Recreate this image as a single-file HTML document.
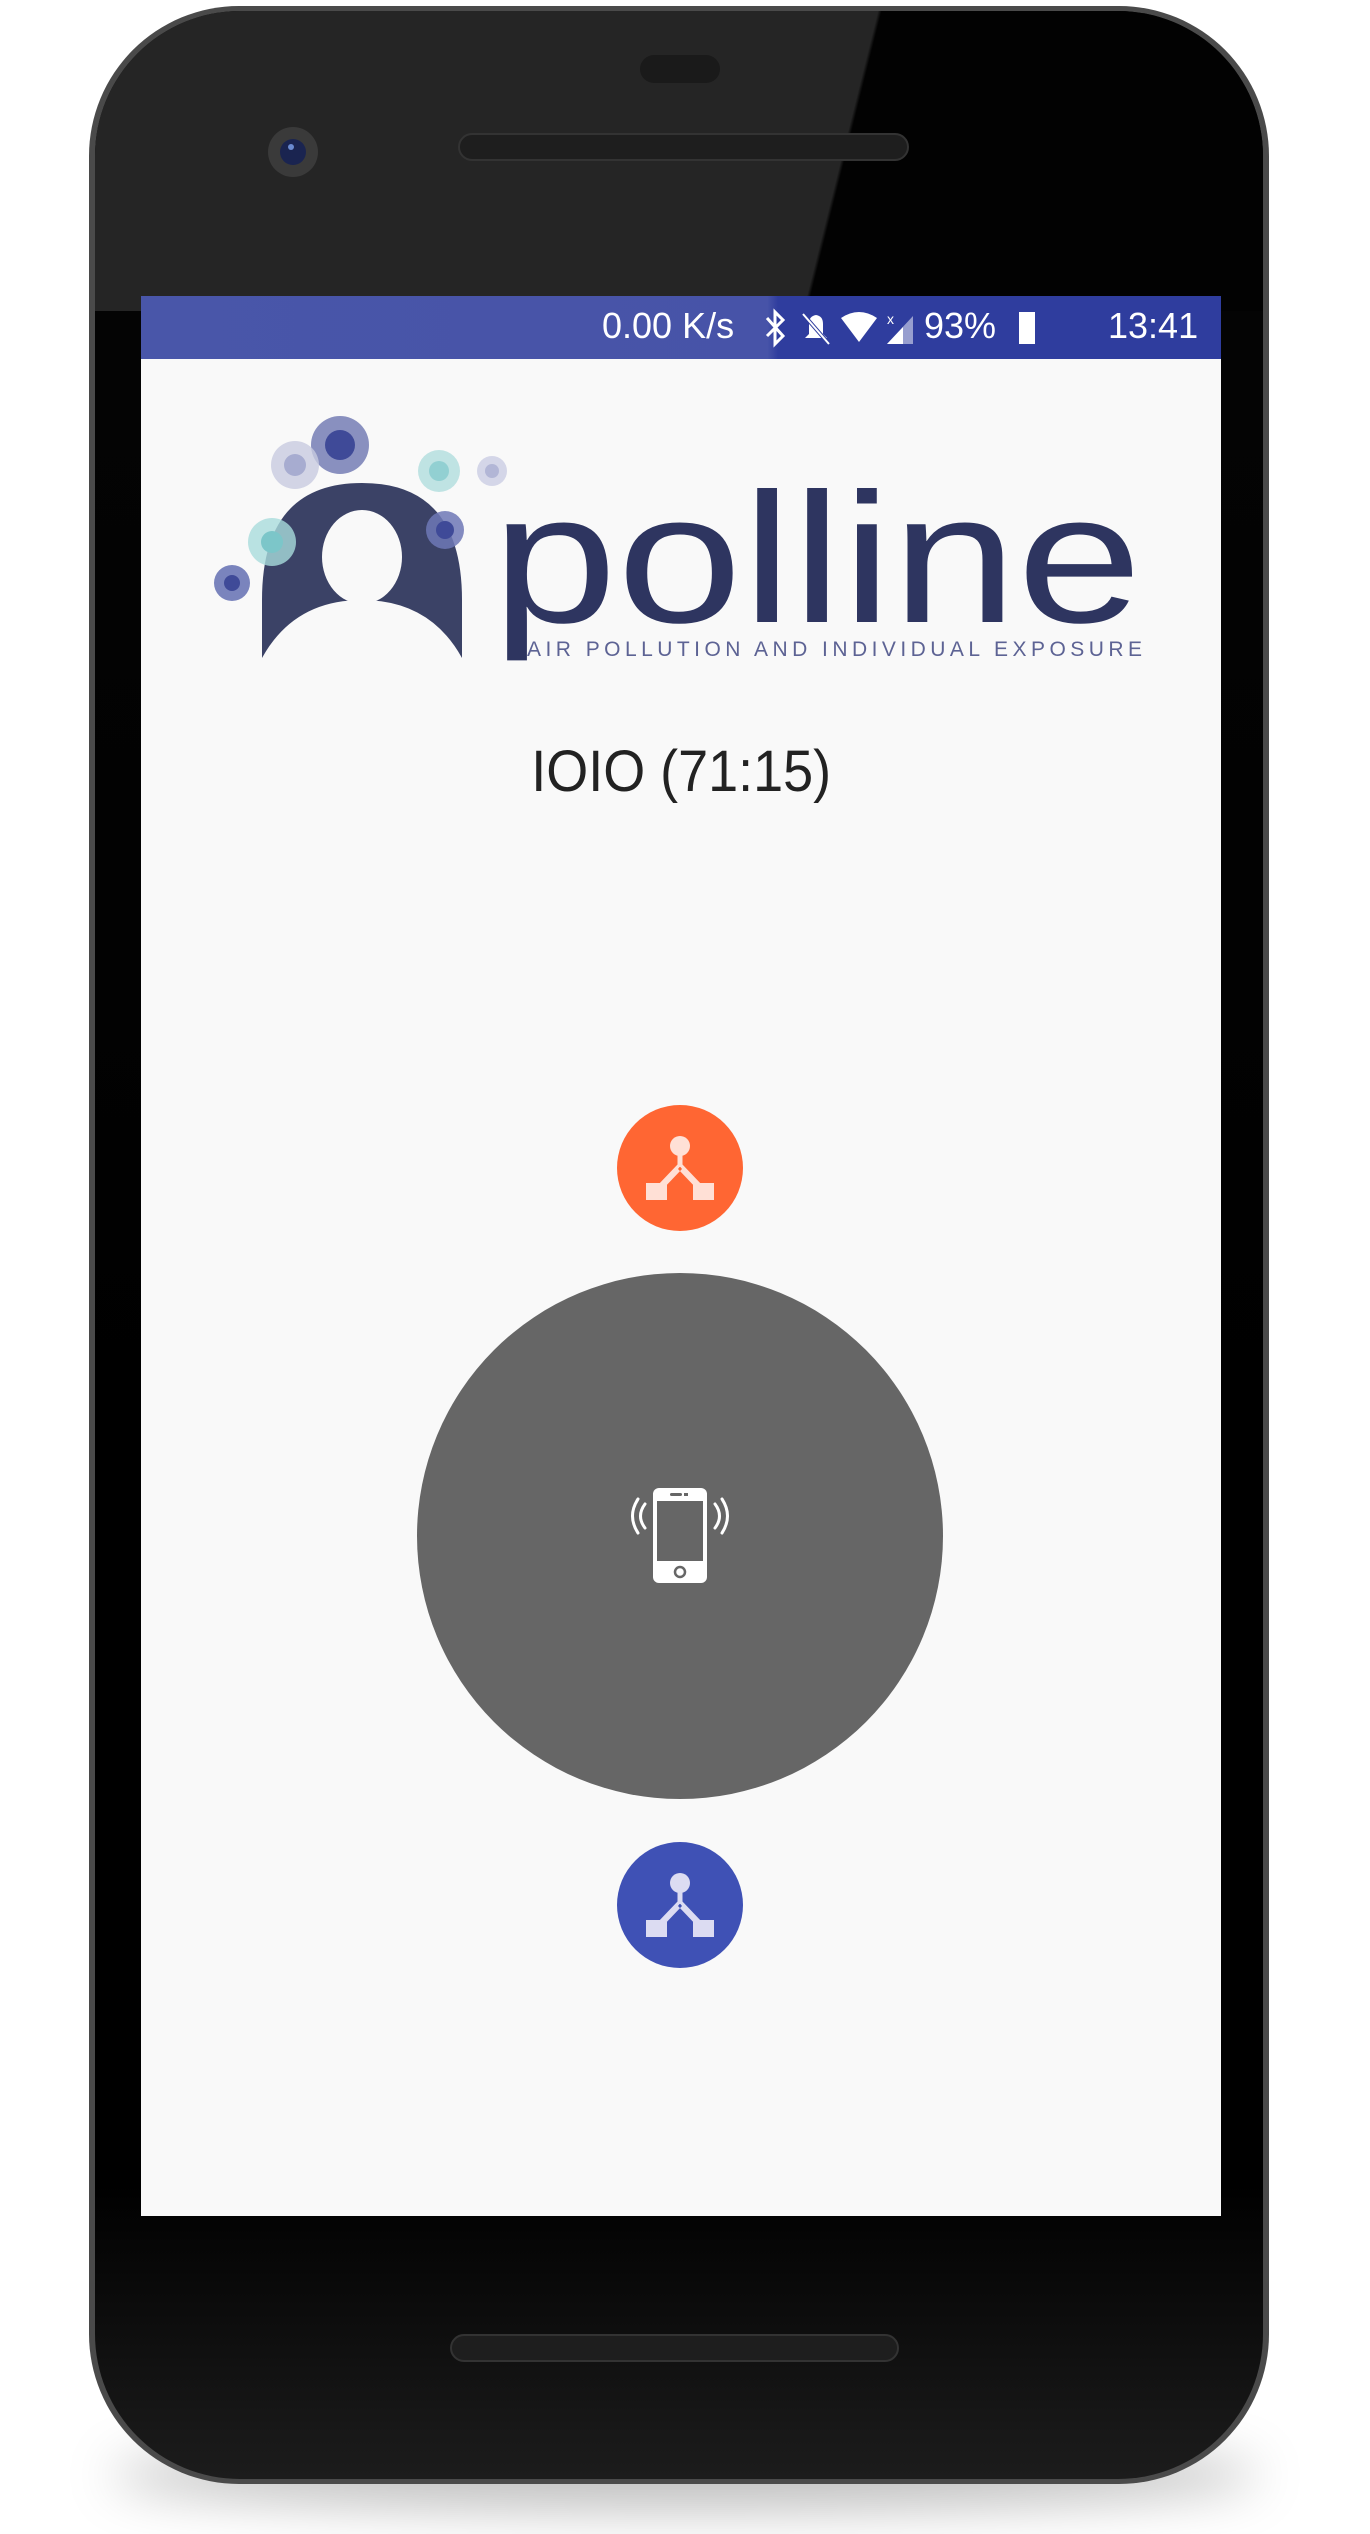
<!DOCTYPE html>
<html><head><meta charset="utf-8"><style>
html,body{margin:0;padding:0;background:#fff;}
body{width:1370px;height:2534px;position:relative;overflow:hidden;font-family:"Liberation Sans",sans-serif;}
.shadow{position:absolute;left:110px;top:2440px;width:1150px;height:70px;border-radius:50%;background:rgba(0,0,0,0.25);filter:blur(25px);}
.phone{position:absolute;left:89px;top:6px;width:1180px;height:2478px;border-radius:150px;background:#4a4a4a;}
.phone2{position:absolute;left:95px;top:11px;width:1168px;height:2468px;border-radius:145px;background:linear-gradient(180deg,#050505 0%,#000 60%,#000 88%,#1c1c1c 100%);}
.glare{position:absolute;left:95px;top:11px;width:1168px;height:300px;border-radius:145px 145px 0 0;background:linear-gradient(104deg,#252525 0%,#252525 63%,#020202 63.3%,#020202 100%);}
.screen{position:absolute;left:141px;top:296px;width:1080px;height:1920px;background:#f9f9f9;}
.status{position:absolute;left:0;top:0;width:1080px;height:63px;background:linear-gradient(90deg,#4956a9 0%,#4753a8 58%,#2f3d9e 59%,#2f3d9e 100%);color:#fff;font-size:36px;}
.spk{position:absolute;border-radius:14px;background:#1e1e1e;border:2px solid #333;}
</style></head><body>
<div class="shadow"></div>
<div class="phone"></div>
<div class="phone2"></div>
<div class="glare"></div>
<div class="spk" style="left:458px;top:133px;width:447px;height:24px;"></div>
<div style="position:absolute;left:640px;top:55px;width:80px;height:28px;border-radius:14px;background:#1a1a1a;"></div>
<div style="position:absolute;left:268px;top:127px;width:50px;height:50px;border-radius:50%;background:#3a3a3a;"><div style="position:absolute;left:12px;top:12px;width:26px;height:26px;border-radius:50%;background:#1a2450;"></div><div style="position:absolute;left:20px;top:17px;width:6px;height:6px;border-radius:50%;background:#6a8ad0;"></div></div>
<div class="spk" style="left:450px;top:2334px;width:445px;height:24px;"></div>
<div class="screen">
 <div class="status">
  <span style="position:absolute;left:461px;top:9px;">0.00 K/s</span>
  <svg style="position:absolute;left:622px;top:12px" width="240" height="40" viewBox="0 0 240 40">
   <path d="M4 10 L20 28 L12 36 L12 4 L20 12 L4 28" stroke="#fff" stroke-width="3" fill="none"/>
   <path d="M42 30 L46 26 L46 16 Q46 8 53 7 Q60 8 60 16 L60 26 L64 30 Z" fill="#fff"/><line x1="40" y1="6" x2="66" y2="36" stroke="#2f3d9e" stroke-width="4"/><line x1="40" y1="6" x2="66" y2="36" stroke="#fff" stroke-width="2"/>
   <path d="M78 10 Q96 -2 114 10 L96 34 Z" fill="#fff"/>
   <path d="M124 36 L150 8 L150 36 Z" fill="#fff" opacity="0.5"/><path d="M124 36 L140 19 L140 36 Z" fill="#fff"/><text x="124" y="16" font-size="14" fill="#fff">x</text>
  </svg>
  <span style="position:absolute;left:783px;top:9px;">93%</span>
  <div style="position:absolute;left:878px;top:16px;width:16px;height:32px;background:#fff;"></div>
  <span style="position:absolute;left:967px;top:9px;">13:41</span>
 </div>
 <svg style="position:absolute;left:0;top:63px" width="1080" height="400" viewBox="141 359 1080 400">
  <path d="M262 658 L262 600 Q262 483 362 483 Q462 483 462 600 L462 658 Q430 600 362 600 Q294 600 262 658 Z" fill="#3b4266"/>
  <ellipse cx="362" cy="557" rx="40" ry="47" fill="#f9f9f9"/>
  <circle cx="340" cy="445" r="29" fill="#6d76b0" opacity="0.8"/><circle cx="340" cy="445" r="15" fill="#3f4a98"/>
  <circle cx="295" cy="465" r="24" fill="#c8cbe0" opacity="0.8"/><circle cx="295" cy="465" r="11" fill="#a7acd0"/>
  <circle cx="439" cy="471" r="21" fill="#bfe3e3"/><circle cx="439" cy="471" r="10" fill="#92d0d2"/>
  <circle cx="492" cy="471" r="15" fill="#d4d6e8"/><circle cx="492" cy="471" r="7" fill="#b2b6d6"/>
  <circle cx="445" cy="530" r="19" fill="#6f78b6" opacity="0.85"/><circle cx="445" cy="530" r="9" fill="#3f4a98"/>
  <circle cx="272" cy="542" r="24" fill="#a9dcdc" opacity="0.8"/><circle cx="272" cy="542" r="11" fill="#7cc6c9"/>
  <circle cx="232" cy="583" r="18" fill="#7a84bd"/><circle cx="232" cy="583" r="8" fill="#3f4a98"/>
  <text x="492" y="622" font-size="185" fill="#2e3560" textLength="650" lengthAdjust="spacingAndGlyphs">polline</text>
  <text x="527" y="656" font-size="21" fill="#5d6394" textLength="615" lengthAdjust="spacing">AIR POLLUTION AND INDIVIDUAL EXPOSURE</text>
 </svg>
 <div style="position:absolute;left:0;width:1080px;top:442px;text-align:center;font-size:58px;color:#222;"><span style="display:inline-block;transform:scaleX(0.93);">IOIO (71:15)</span></div>
 <svg style="position:absolute;left:0;top:0" width="1080" height="1920" viewBox="141 296 1080 1920">
  <defs><g id="net"><circle cx="0" cy="-22" r="10"/><rect x="-2.5" y="-15" width="5" height="14"/><path d="M-2 -4 L-23 18 L-18 22 L2 1 Z M2 -4 L23 18 L18 22 L-2 1 Z"/><rect x="-34" y="15" width="21" height="17"/><rect x="13" y="15" width="21" height="17"/></g></defs>
  <circle cx="680" cy="1168" r="63" fill="#ff6633"/>
  <use href="#net" x="680" y="1168" fill="#ffe0d6"/>
  <circle cx="680" cy="1536" r="263" fill="#666"/>
  <rect x="653" y="1488" width="54" height="95" rx="6" fill="#fff"/>
  <rect x="657" y="1501" width="46" height="60" fill="#666"/>
  <rect x="670" y="1493" width="12" height="3" rx="1.5" fill="#666"/><rect x="684" y="1493" width="4" height="3" fill="#666"/>
  <circle cx="680" cy="1572" r="5" fill="none" stroke="#666" stroke-width="2.5"/>
  <path d="M645 1504 Q636 1516 645 1528 M638 1499 Q627 1516 638 1533 M715 1504 Q724 1516 715 1528 M722 1499 Q733 1516 722 1533" stroke="#fff" stroke-width="3" fill="none" stroke-linecap="round"/>
  <circle cx="680" cy="1905" r="63" fill="#3f51b5"/>
  <use href="#net" x="680" y="1905" fill="#dcdcf2"/>
 </svg>
</div>
</body></html>
